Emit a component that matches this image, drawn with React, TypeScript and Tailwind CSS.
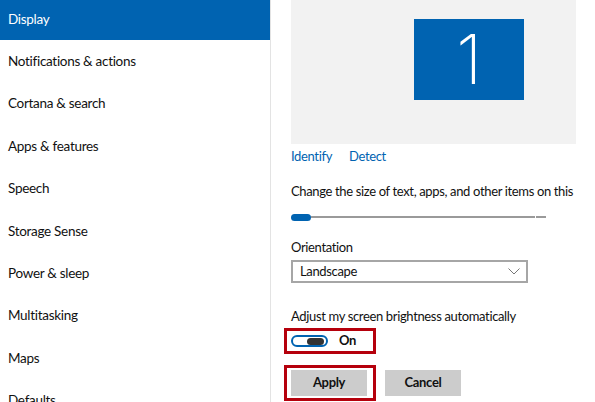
const navItems = [
  "Display",
  "Notifications & actions",
  "Cortana & search",
  "Apps & features",
  "Speech",
  "Storage Sense",
  "Power & sleep",
  "Multitasking",
  "Maps",
  "Defaults",
];

function Sidebar() {
  return (
    <nav className="w-[271px] shrink-0 border-r border-[#e3e3e3] h-full overflow-hidden">
      <ul className="mt-[-2.4px]">
        {navItems.map((item, i) => (
          <li
            key={item}
            className={
              i === 0
                ? "h-[42.4px] flex items-center pl-[8px] bg-[#0063b1] text-white text-[13.5px] tracking-[-0.3px]"
                : "h-[42.4px] flex items-center pl-[8px] text-[#111] text-[13.5px] tracking-[-0.3px]"
            }
          >
            {item}
          </li>
        ))}
      </ul>
    </nav>
  );
}

function Preview() {
  return (
    <div className="w-[285px] h-[144px] bg-[#f2f2f2] pt-[19px] pl-[123px]">
      <div className="w-[110px] h-[81px] bg-[#0063b1] flex items-center justify-center">
        <span className="text-white text-[68px] font-extralight leading-none font-['Inter',sans-serif] mt-[-2px]">
          1
        </span>
      </div>
    </div>
  );
}

export default function App() {
  return (
    <div className="w-[595px] h-[402px] overflow-hidden bg-white flex font-['Lato','Noto_Sans',sans-serif]">
      <Sidebar />
      <main className="pl-[20px] flex flex-col text-[13px] tracking-[-0.35px]">
        <Preview />

        <div className="mt-[4px] h-[18px] flex items-center gap-[17px] text-[#0063b1]">
          <span>Identify</span>
          <span>Detect</span>
        </div>

        <p className="mt-[16px] h-[18px] leading-[18px] text-[#111] whitespace-nowrap">
          Change the size of text, apps, and other items on this
        </p>

        <div className="mt-[14px] h-[6px] w-[256px] flex items-center">
          <div className="w-[20px] h-[7px] rounded-full bg-[#0063b1]" />
          <div className="w-[224px] h-[2px] bg-[#9a9a9a]" />
          <div className="w-[1px]" />
          <div className="w-[10px] h-[2px] bg-[#9a9a9a]" />
        </div>

        <p className="mt-[18px] h-[18px] leading-[18px] text-[#111]">Orientation</p>

        <div className="mt-[4px] w-[237px] h-[23px] border-2 border-[#a6a6a6] flex items-center justify-between pl-[7px] pr-[6px] text-[#111]">
          <span>Landscape</span>
          <svg width="12" height="7" viewBox="0 0 12 7" fill="none" stroke="#777" strokeWidth="1">
            <path d="M0.5 0.5 L6 6 L11.5 0.5" />
          </svg>
        </div>

        <p className="mt-[24px] h-[18px] leading-[18px] text-[#111] whitespace-nowrap">
          Adjust my screen brightness automatically
        </p>

        <div className="mt-[3px] -ml-[7px] w-[92px] h-[26px] border-[3px] border-[#b5000c] flex items-center pl-[4px] gap-[11px]">
          <div className="w-[37px] h-[12px] rounded-full border-2 border-[#0063b1] flex items-center justify-end pr-[2px]">
            <div className="w-[17px] h-[7px] rounded-full bg-[#333]" />
          </div>
          <span className="font-bold text-[#111]">On</span>
        </div>

        <div className="mt-[11px] flex items-start">
          <div className="-ml-[7px] w-[92px] h-[36px] border-[3px] border-[#b5000c] pl-[4px] pt-[2px]">
            <button className="w-[76px] h-[26px] bg-[#cccccc] font-bold text-[#111]">
              Apply
            </button>
          </div>
          <button className="ml-[9px] mt-[5px] w-[76px] h-[26px] bg-[#cccccc] font-bold text-[#111]">
            Cancel
          </button>
        </div>
      </main>
    </div>
  );
}
